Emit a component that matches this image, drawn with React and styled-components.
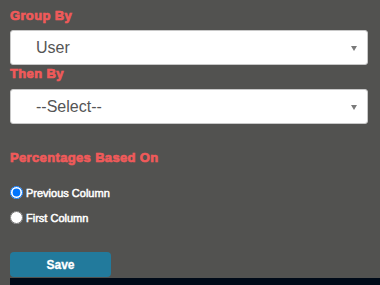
import styled, { createGlobalStyle } from 'styled-components'
import { useState } from 'react'

const GlobalStyle = createGlobalStyle`
  html, body {
    margin: 0;
    padding: 0;
    background: #525250;
    font-family: "Liberation Sans", Arial, sans-serif;
  }
`

const Page = styled.div`
  width: 380px;
  height: 285px;
  background: #525250;
  display: flex;
  flex-direction: column;
  overflow: hidden;
`

const Form = styled.div`
  padding: 8px 12px 0 10px;
  display: flex;
  flex-direction: column;
`

const Label = styled.div`
  color: #f05a5a;
  font-size: 13px;
  font-weight: bold;
  line-height: 16px;
  letter-spacing: 0.35px;
  -webkit-text-stroke: 0.7px #f05a5a;
  margin-top: ${p => p.$top || 0}px;
  margin-bottom: ${p => p.$bottom || 0}px;
`

const SelectWrap = styled.div`
  position: relative;
  &::after {
    content: '';
    position: absolute;
    right: 11px;
    top: 16px;
    border-left: 3.5px solid transparent;
    border-right: 3.5px solid transparent;
    border-top: 5px solid #7a7a7a;
    pointer-events: none;
  }
`

const Select = styled.select`
  appearance: none;
  width: 100%;
  height: 35px;
  box-sizing: border-box;
  background: #fff;
  border: 1px solid #c8c8c8;
  border-radius: 3px;
  padding: 0 0 0 25px;
  font-family: "Liberation Sans", Arial, sans-serif;
  font-size: 16px;
  color: #555;
  outline: none;
`

const RadioGroup = styled.div`
  display: flex;
  flex-direction: column;
  gap: 10px;
  margin-top: 19px;
`

const RadioRow = styled.label`
  display: flex;
  align-items: center;
  height: 15px;
  color: #fff;
  font-size: 11px;
  -webkit-text-stroke: 0.5px #fff;
  cursor: pointer;
`

const Radio = styled.input`
  margin: 0 3px 0 0;
  width: 13px;
  height: 13px;
`

const SaveButton = styled.button`
  margin-top: 27px;
  width: 101px;
  height: 25px;
  border: none;
  border-radius: 4px;
  background: #227a9c;
  color: #fff;
  font-family: "Liberation Sans", Arial, sans-serif;
  font-size: 12px;
  font-weight: bold;
  -webkit-text-stroke: 0.3px #fff;
  cursor: pointer;
`

const Footer = styled.div`
  margin-top: auto;
  margin-left: 10px;
  height: 7px;
  background: #000a18;
`

export default function App() {
  const [basis, setBasis] = useState('previous')

  return (
    <Page>
      <GlobalStyle />
      <Form>
        <Label $bottom={6}>Group By</Label>
        <SelectWrap>
          <Select defaultValue="user">
            <option value="user">User</option>
          </Select>
        </SelectWrap>
        <Label $top={1} $bottom={7}>Then By</Label>
        <SelectWrap>
          <Select defaultValue="">
            <option value="">--Select--</option>
          </Select>
        </SelectWrap>
        <Label $top={26}>Percentages Based On</Label>
        <RadioGroup>
          <RadioRow>
            <Radio type="radio" name="basis" checked={basis === 'previous'} onChange={() => setBasis('previous')} />
            Previous Column
          </RadioRow>
          <RadioRow>
            <Radio type="radio" name="basis" checked={basis === 'first'} onChange={() => setBasis('first')} />
            First Column
          </RadioRow>
        </RadioGroup>
        <div>
          <SaveButton>Save</SaveButton>
        </div>
      </Form>
      <Footer />
    </Page>
  )
}
